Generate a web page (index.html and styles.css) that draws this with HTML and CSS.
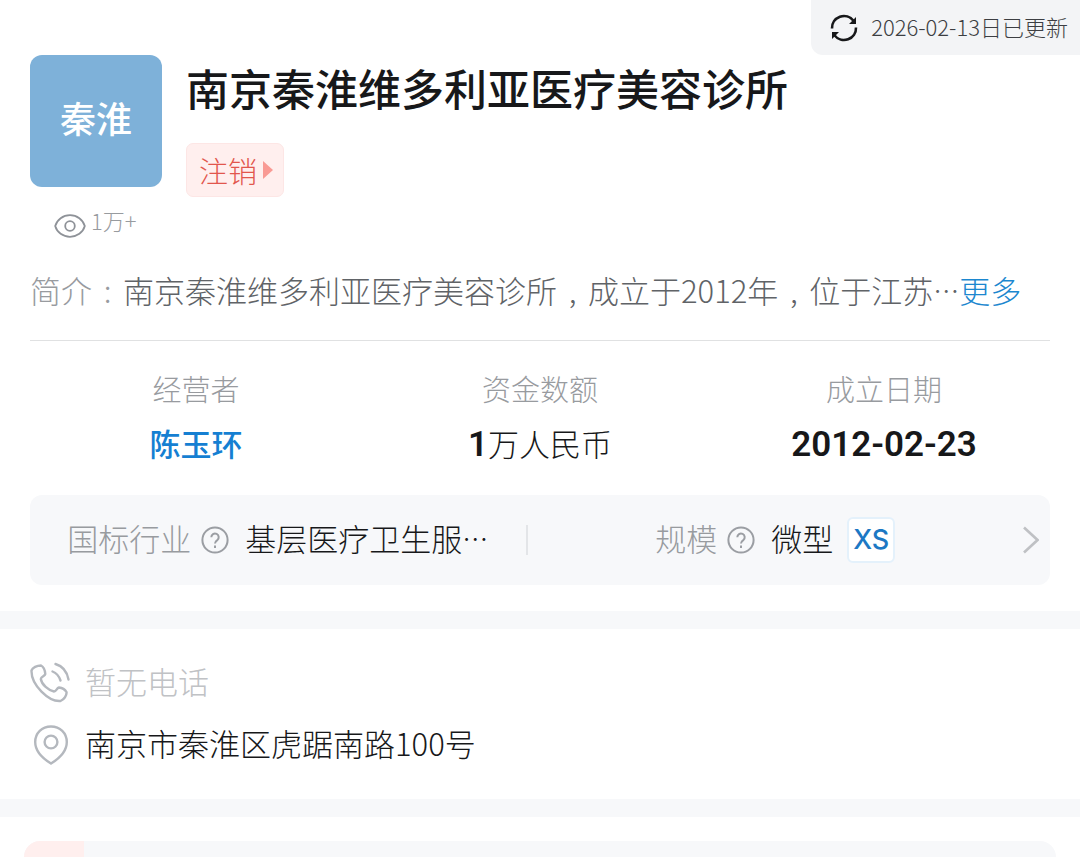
FILE: index.html
```
<!DOCTYPE html>
<html lang="zh-CN">
<head>
  <meta charset="UTF-8">
  <meta name="viewport" content="width=device-width, initial-scale=1.0">
  <title>南京秦淮维多利亚医疗美容诊所</title>
  <link rel="stylesheet" href="styles.css">
</head>
<body>

  <button class="update" type="button">
    <svg width="28" height="28" viewBox="0 0 28 28" fill="none" stroke="#17181a" stroke-width="2.6">
      <path d="M2 14.500A12 12 0 0 1 23.500 6.700M26 13.500A12 12 0 0 1 4.500 21.300"/>
      <path d="M26 3v7h-7zM2 25v-7h7z" fill="#17181a" stroke="none"/>
    </svg>
    <span class="text">2026-02-13日已更新</span>
  </button>

  <main>
    <section class="company">
      <header class="head">
        <div class="logo">秦淮</div>
        <div class="head-info">
          <h1>南京秦淮维多利亚医疗美容诊所</h1>
          <button class="status" type="button">
            <span>注销</span>
            <svg width="10" height="18" viewBox="0 0 10 18"><path d="M0 0l10 9-10 9z" fill="#f99a94"/></svg>
          </button>
        </div>
      </header>

      <div class="views">
        <svg width="32" height="24" viewBox="0 0 32 24" fill="none" stroke="#8e9298" stroke-width="1.8">
          <path d="M1.200 12C3 5.500 9 1.200 16 1.200S29 5.500 30.800 12C29 18.500 23 22.800 16 22.800S3 18.500 1.200 12z"/>
          <circle cx="16" cy="12" r="4.800"/>
        </svg>
        <span>1万+</span>
      </div>

      <p class="intro"><span class="muted">简介<span class="punct">:</span></span>南京秦淮维多利亚医疗美容诊所<span class="punct">,</span>成立于2012年<span class="punct">,</span>位于江苏<span class="dots">…</span><a href="#">更多</a></p>

      <dl class="stats">
        <div class="stat">
          <dt>经营者</dt>
          <dd><a href="#">陈玉环</a></dd>
        </div>
        <div class="stat">
          <dt>资金数额</dt>
          <dd><span class="num">1</span>万人民币</dd>
        </div>
        <div class="stat">
          <dt>成立日期</dt>
          <dd><span class="num">2012-02-23</span></dd>
        </div>
      </dl>

      <div class="industry">
        <div class="cell">
          <span class="text muted">国标行业</span>
          <button class="help" type="button" aria-label="国标行业说明">
            <svg width="28" height="28" viewBox="0 0 28 28" fill="none" stroke="#9b9ea3" stroke-width="2">
              <circle cx="14" cy="14" r="12.600"/>
              <path d="M10.300 11.200a3.700 3.700 0 1 1 6 2.900c-1.500 1.100-2.300 1.700-2.300 3.500M14 19.600v2.400"/>
            </svg>
          </button>
          <span class="text">基层医疗卫生服<span class="dots">…</span></span>
        </div>
        <div class="divider"></div>
        <div class="cell">
          <span class="text muted">规模</span>
          <button class="help" type="button" aria-label="规模说明">
            <svg width="28" height="28" viewBox="0 0 28 28" fill="none" stroke="#9b9ea3" stroke-width="2">
              <circle cx="14" cy="14" r="12.600"/>
              <path d="M10.300 11.200a3.700 3.700 0 1 1 6 2.900c-1.500 1.100-2.300 1.700-2.300 3.500M14 19.600v2.400"/>
            </svg>
          </button>
          <span class="text">微型</span>
          <span class="size">XS</span>
        </div>
        <svg width="16" height="28" viewBox="0 0 16 28" fill="none" stroke="#bfc1c4" stroke-width="2.600"><path d="M1 1.500L14.500 14 1 26.500"/></svg>
      </div>
    </section>

    <section class="contact">
      <div class="contact-row no-phone">
        <svg width="42" height="42" viewBox="0 0 42 42" fill="none" stroke="#b4b8be" stroke-width="2.400" stroke-linecap="round" stroke-linejoin="round">
          <path d="M1.500 8.500C2.500 5.500 7 3.500 11 3.500c3 1.500 4 5 4.300 8.500-.3 2-4.300 2.500-4.500 5 .8 5.500 7.700 11.500 13.200 12.500 2.500 0 2.500-3.500 5-4 3 .3 6 2 7.500 4.500.5 3.500-2.500 7.500-6 9C19 40 1 23 1.500 8.500z"/>
          <path d="M22.500 9.500c4 1.500 6.500 4.500 8 9M25.500 2c7 2 11.500 7.500 13 15.500"/>
        </svg>
        <span class="text">暂无电话</span>
      </div>
      <div class="contact-row">
        <svg width="42" height="42" viewBox="0 0 42 42" fill="none" stroke="#b4b8be" stroke-width="2.400">
          <path d="M21 39.500C12 34 5.200 26.500 5.200 18 5.200 9 12 2.500 21 2.500S36.800 9 36.800 18c0 8.500-6.800 16-15.800 21.500z"/>
          <circle cx="21" cy="18" r="6.400"/>
        </svg>
        <span class="text">南京市秦淮区虎踞南路100号</span>
      </div>
    </section>

    <section class="next">
      <div class="risk"><div class="risk-tag"></div></div>
    </section>
  </main>

</body>
</html>
```
FILE: styles.css
```
* {
  box-sizing: border-box;
  margin: 0;
  padding: 0;
}

body {
  background-color: #fff;
  color: #17181a;
  font-family: "Noto Sans CJK SC", sans-serif;
  font-size: 31px;
  font-weight: 300;
  line-height: 44px;
}

button {
  border: none;
  background: none;
  color: inherit;
  font: inherit;
  cursor: pointer;
}

a {
  color: #1c87cf;
  text-decoration: none;
}

svg {
  display: block;
  flex: none;
}

/* CJK glyphs sit low in the line, lift them next to icons */
.text {
  padding-bottom: 4px;
}

.muted {
  color: #989b9f;
}

/* Update notice pinned to the corner */
.update {
  position: absolute;
  top: 0;
  right: 0;
  display: flex;
  align-items: center;
  gap: 13px;
  height: 55px;
  padding: 0 12px 0 19px;
  border-radius: 0 0 0 12px;
  background-color: #f3f4f6;
  color: #3c3e42;
  font-size: 22px;
}

.company {
  padding: 55px 30px 26px;
}

.head {
  display: flex;
  gap: 24px;
}

.logo {
  display: flex;
  align-items: center;
  justify-content: center;
  width: 132px;
  height: 132px;
  padding-bottom: 8px;
  border-radius: 12px;
  background-color: #7eb1d9;
  color: #fff;
  font-size: 36px;
  font-weight: 500;
}

h1 {
  margin-bottom: 24px;
  font-size: 43px;
  font-weight: 500;
  line-height: 64px;
}

.status {
  display: flex;
  align-items: center;
  gap: 6px;
  height: 54px;
  padding: 0 10px 0 12px;
  border: 1px solid #fde6e5;
  border-radius: 7px;
  background-color: #ffefee;
  color: #e2564d;
  font-size: 29px;
}

.views {
  display: flex;
  align-items: center;
  gap: 5px;
  padding-left: 24px;
  color: #989b9f;
  font-size: 22px;
  line-height: 46px;
}

.views svg {
  margin-top: 12px;
}

.intro {
  margin-top: 25px;
  padding-bottom: 28px;
  border-bottom: 1px solid #e0e1e2;
  color: #606367;
  white-space: nowrap;
}

.punct {
  display: inline-block;
  width: 31px;
  text-align: center;
}

.dots {
  font-size: 26px;
  line-height: 1;
  vertical-align: 2px;
}

.stats {
  display: grid;
  grid-template-columns: repeat(3, 1fr);
  margin: 25px -6px 27px;
  text-align: center;
}

.stat dt {
  margin-bottom: 8px;
  color: #989b9f;
  font-size: 29px;
}

.stat dd {
  height: 50px;
  line-height: 50px;
}

.stat a {
  color: #157fd2;
  font-weight: 500;
}

.num {
  font-family: Roboto, sans-serif;
  font-size: 35px;
  font-weight: 600;
}

.industry {
  display: flex;
  align-items: center;
  height: 90px;
  padding-right: 11px;
  border-radius: 12px;
  background-color: #f7f8fa;
}

.cell {
  display: flex;
  flex: 1;
  align-items: center;
  justify-content: center;
  white-space: nowrap;
}

.divider {
  width: 2px;
  height: 30px;
  background-color: #e3e5e8;
}

.help {
  margin: 0 16px 0 10px;
}

.size {
  margin-left: 14px;
  padding: 0 4px;
  border: 2px solid #e4f1fb;
  border-radius: 6px;
  background-color: #fff;
  color: #1c78c4;
  font-family: Inter, sans-serif;
  font-size: 27px;
  font-weight: 500;
  line-height: 42px;
}

.contact {
  padding: 30px;
  border-top: 18px solid #f7f8fa;
  border-bottom: 18px solid #f7f8fa;
}

.contact-row {
  display: flex;
  align-items: center;
  gap: 13px;
}

.contact-row + .contact-row {
  margin-top: 14px;
}

.no-phone {
  color: #c0c2c5;
}

.next {
  padding: 24px 24px 0;
}

.risk {
  height: 16px;
  overflow: hidden;
  border-radius: 16px 16px 0 0;
  background-color: #f7f8fa;
}

.risk-tag {
  width: 60px;
  height: 100%;
  background-color: #ffefee;
}
```
